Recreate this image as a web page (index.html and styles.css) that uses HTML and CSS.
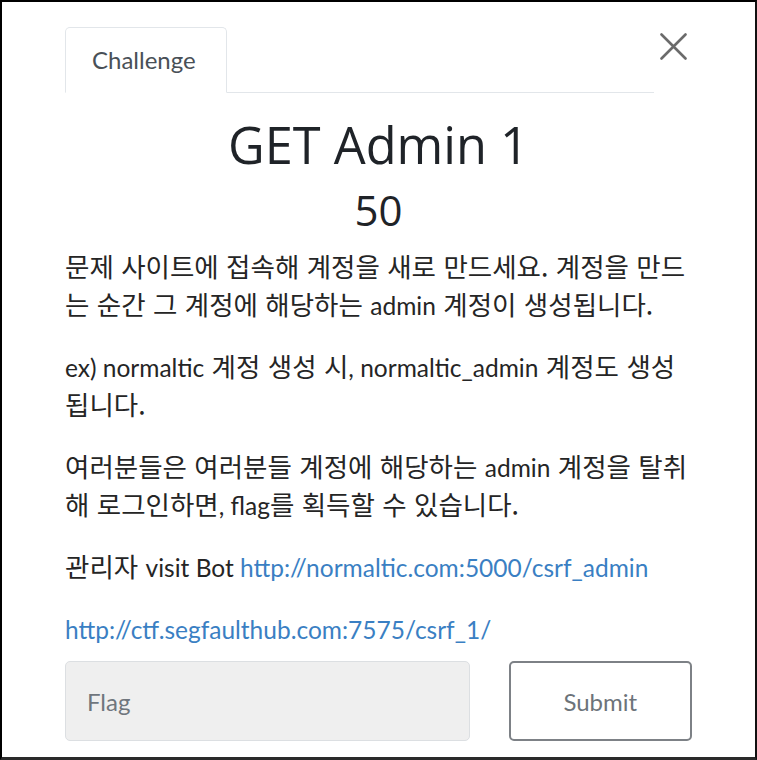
FILE: index.html
```html
<!DOCTYPE html>
<html lang="ko">
<head>
<meta charset="utf-8">
<title>GET Admin 1</title>
<link rel="stylesheet" href="styles.css">
</head>
<body>
<div class="frame">
  <div class="modal">
    <div class="modal-head">
      <ul class="tabs">
        <li class="tab">Challenge</li>
      </ul>
      <button class="close" aria-label="Close">
        <svg width="27" height="27" viewBox="0 0 27 27"><path d="M1.5 1.5 L25.5 25.5 M25.5 1.5 L1.5 25.5" stroke="#6b6b6b" stroke-width="2.6" stroke-linecap="round" fill="none"/></svg>
      </button>
    </div>
    <h2 class="title">GET Admin 1</h2>
    <h3 class="points">50</h3>
    <div class="desc">
      <p>문제 사이트에 접속해 계정을 새로 만드세요. 계정을 만드는 순간 그 계정에 해당하는 <span class="en">admin</span> 계정이 생성됩니다.</p>
      <p><span class="en">ex) normaltic</span> 계정 생성 시<span class="en">, normaltic_admin</span> 계정도 생성됩니다.</p>
      <p>여러분들은 여러분들 계정에 해당하는 <span class="en">admin</span> 계정을 탈취해 로그인하면<span class="en">, flag</span>를 획득할 수 있습니다.</p>
      <p>관리자 <span class="en">visit Bot </span><a class="en" href="#">http://normaltic.com:5000/csrf_admin</a></p>
      <p class="last"><a class="en" href="#">http://ctf.segfaulthub.com:7575/csrf_1/</a></p>
    </div>
    <div class="submit-row">
      <input class="flag-input" type="text" placeholder="Flag">
      <button class="submit-btn">Submit</button>
    </div>
  </div>
</div>
</body>
</html>
```
FILE: styles.css
```css
html, body {
  margin: 0;
  padding: 0;
  background: #ffffff;
}
.frame {
  box-sizing: border-box;
  width: 757px;
  height: 760px;
  border-top: 2px solid #000;
  border-left: 2px solid #000;
  border-right: 2px solid #111;
  border-bottom: 3px solid #2a2a2a;
  padding: 25px 63px 0 63px;
  font-family: Lato, "Noto Sans CJK KR", sans-serif;
  color: #212529;
}
.modal {
  display: flex;
  flex-direction: column;
}
.modal-head {
  display: flex;
  align-items: flex-start;
}
.tabs {
  flex: 1;
  list-style: none;
  margin: 0;
  padding: 0;
  display: flex;
  border-bottom: 1px solid #e2e6ea;
}
.tab {
  box-sizing: border-box;
  width: 162px;
  height: 66px;
  margin-bottom: -1px;
  border: 1px solid #e2e6ea;
  border-bottom-color: #ffffff;
  border-radius: 5px 5px 0 0;
  font-size: 24px;
  line-height: 36px;
  padding: 14px 0 0 26px;
  color: #495057;
}
.close {
  background: none;
  border: none;
  padding: 0;
  margin: 6px 5px 0 6px;
  width: 27px;
  height: 27px;
  display: block;
}
.close svg {
  display: block;
}
.title {
  margin: 23px 0 12px;
  font-family: "Open Sans", Lato, sans-serif;
  font-weight: 400;
  font-size: 50.5px;
  line-height: 57px;
  text-align: center;
  color: #1f2328;
}
.points {
  margin: 0 0 12px;
  font-family: "Open Sans", Lato, sans-serif;
  font-weight: 400;
  font-size: 42px;
  line-height: 50px;
  text-align: center;
  color: #1f2328;
}
.desc p {
  margin: 0 0 24px;
  font-family: "Noto Sans CJK KR", sans-serif;
  font-size: 26.5px;
  line-height: 38px;
  color: #252525;
}
.desc .en {
  font-family: Lato, sans-serif;
  font-size: 24.5px;
  line-height: 1;
}
.desc p.last {
  margin-bottom: 14px;
}
.desc a {
  color: #3a7fc3;
  text-decoration: none;
}
.submit-row {
  display: flex;
  gap: 39px;
}
.flag-input {
  box-sizing: border-box;
  width: 406px;
  height: 80px;
  background: #efefef;
  border: 1px solid #dcdfe2;
  border-radius: 5px;
  padding: 0 0 0 21px;
  font-family: Lato, sans-serif;
  font-size: 24px;
  color: #495057;
  outline: none;
}
.flag-input::placeholder {
  color: #6f767d;
}
.submit-btn {
  box-sizing: border-box;
  width: 184px;
  height: 80px;
  background: #ffffff;
  border: 2px solid #7d8186;
  border-radius: 5px;
  font-family: Lato, sans-serif;
  font-size: 24px;
  color: #6c737a;
}
```
